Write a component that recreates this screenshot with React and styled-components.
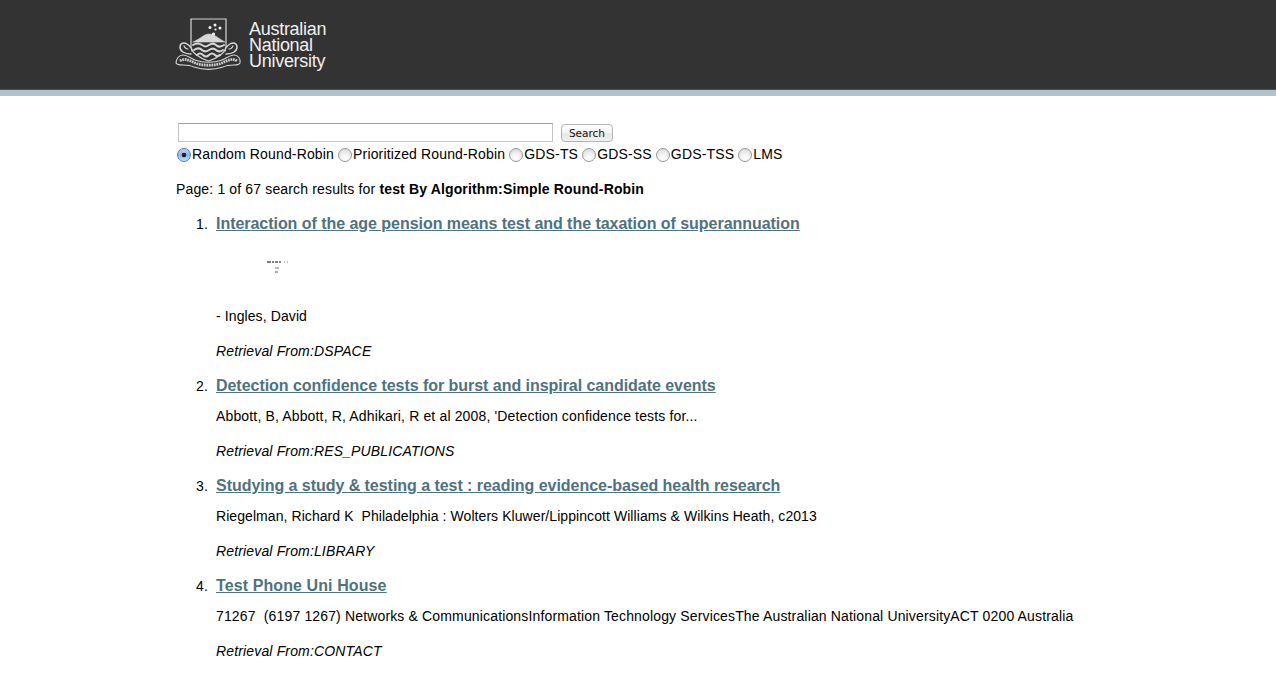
import React from "react";
import styled, { createGlobalStyle } from "styled-components";

const Global = createGlobalStyle`
  html, body { margin: 0; padding: 0; background: #fff; }
  body {
    font-family: "Liberation Sans", Arial, sans-serif;
    font-size: 14px;
    line-height: 21px;
    letter-spacing: 0.15px;
    color: #000;
  }
`;

const Header = styled.header`
  height: 90px;
  background: #333;
  border-bottom: 6px solid #aec4c9;
  box-sizing: content-box;
  display: flex;
  align-items: flex-start;
  padding-left: 172px;
  box-shadow: inset 0 -1px 0 #4a4f50;
`;
const Crest = styled.svg`
  width: 76px;
  height: 60px;
  margin-top: 14px;
  flex: none;
`;
const Wordmark = styled.div`
  margin: 21px 0 0 1px;
  font-size: 18px;
  line-height: 16px;
  letter-spacing: -0.28px;
  color: #efefef;
`;
const Main = styled.main`
  padding: 27px 0 0 176px;
`;
const SearchForm = styled.form`
  margin: 0;
`;
const SearchRow = styled.div`
  display: flex;
  align-items: flex-start;
  padding-left: 2px;
  height: 21px;
`;
const SearchInput = styled.input`
  width: 375px;
  height: 19px;
  box-sizing: border-box;
  margin: 0;
  padding: 0 2px;
  border: 1px solid #c4c4c4;
  border-top-color: #9e9e9e;
  background: #fff;
  outline: none;
`;
const SearchButton = styled.button`
  width: 52px;
  height: 18px;
  margin: 1px 0 0 8px;
  padding: 0;
  box-sizing: border-box;
  border: 1px solid #b4b4b4;
  border-radius: 4px;
  background: linear-gradient(#ffffff, #f3f3f3 50%, #e6e6e6 55%, #f2f2f2);
  font-family: "DejaVu Sans", sans-serif;
  font-size: 10.5px;
  line-height: 15px;
  letter-spacing: 0;
  color: #111;
`;
const RadioRow = styled.div`
  height: 21px;
  white-space: pre;
`;
const RadioLabel = styled.label`
  display: inline-flex;
  align-items: center;
  margin-right: 3.1px;
`;
const Radio = styled.input.attrs({ type: "radio", name: "alg" })`
  appearance: none;
  width: 14px;
  height: 14px;
  margin: 1px 1px 0 1px;
  border-radius: 50%;
  border: 1px solid #9a9a9a;
  box-sizing: border-box;
  background: radial-gradient(circle at 50% 75%, #ffffff, #f0f0f0 45%, #cfcfcf 100%);
  &:checked {
    border-color: #5b7fb5;
    background: radial-gradient(circle, #222 0 2px, transparent 2.6px), linear-gradient(#bcd2f0, #8fb4e8 50%, #c6dbf7);
  }
`;
const Status = styled.p`
  margin: 14px 0 0;
`;
const Results = styled.ol`
  margin: 12px 0 0;
  padding: 0 0 0 40px;
`;
const Result = styled.li`
  margin: 0 0 12px;
  &::marker {
    content: counter(list-item) ".\\00a0\\00a0";
  }
`;
const ResultTitle = styled.a`
  display: block;
  font-size: 16px;
  line-height: 24px;
  font-weight: bold;
  letter-spacing: ${(p) => p.$tracking || "-0.04px"};
  color: #4e7280;
  text-decoration: underline;
  margin-bottom: 8px;
`;
const Para = styled.p`
  margin: 0 0 14px;
  letter-spacing: ${(p) => p.$tracking || "0.15px"};
`;
const Source = styled.p`
  margin: 0;
  font-style: italic;
`;
const Thumb = styled.svg`
  display: block;
  width: 24px;
  height: 16px;
  margin: 23px 0 31px 50px;
`;

const Shimmer = () => (
  <g stroke="#000" strokeWidth="1" fill="none">
    <path d="M1 3h4M6 3h2M9 3h3M13 3h2" />
    <path d="M18 3h1M21 3h1" stroke="#777" />
    <path d="M9 9h4" stroke="#777" />
    <path d="M9 13h3" stroke="#555" />
  </g>
);

const LogoMark = () => (
  <Crest viewBox="0 0 76 60" aria-hidden="true">
    <g fill="none" stroke="#d6d6d6" strokeLinecap="round">
      <path d="M19 5H54V33C54 38 46 44 36.5 47 27 44 19 38 19 33Z" strokeWidth="1.2" fill="#333" />
      <path d="M21 28C28 25 32 20 37 20 43 20 47 25 53 28Z" fill="#d6d6d6" strokeWidth=".5" />
      <path d="M21 31C24 29 27 29 30 31S34 33 37 31 42 29 44 31 49 33 52 31" strokeWidth="2" />
      <path d="M22 36C25 34 28 34 30 36S34 38 37 36 42 34 44 36 48 38 51 36" strokeWidth="2" />
      <path d="M25 41C27 39 29 39 31 41S35 43 37 41 41 39 43 41 46 42 48 41" strokeWidth="2" />
      <path d="M19 40C12 40 8 37 8 33 8 29 12 28 15 30 18 32 20 34 20 37" strokeWidth="1.5" fill="#333" />
      <path d="M54 40C61 40 65 37 65 33 65 29 61 28 58 30 55 32 53 34 53 37" strokeWidth="1.5" fill="#333" />
      <path d="M12 32C13 34 15 35 16 35M61 32C60 34 58 35 57 35" strokeWidth="1.2" />
      <path d="M4 49C4 45 7 41 11 41 15 41 18 44 23 46 31 49 42 49 50 46 55 44 58 41 62 41 66 41 69 45 68 49 67 51 65 51 62 51 58 51 55 51 51 53 42 56 31 56 22 53 18 51 15 51 11 51 8 51 5 51 4 49Z" strokeWidth="1.1" fill="#333" />
      <path d="M8 47C12 44 17 46 23 49 31 52 42 52 50 49 56 46 61 44 65 47" strokeWidth="2.8" stroke="#cacaca" strokeDasharray="1.8 .7" strokeLinecap="butt" />
    </g>
    <g fill="#f0f0f0">
      <circle cx="43" cy="11" r="1.5" />
      <circle cx="38" cy="13.5" r="1.5" />
      <circle cx="48" cy="14" r="1.5" />
      <circle cx="43.5" cy="15.5" r="1.1" />
      <circle cx="41.5" cy="20" r="1.6" />
    </g>
  </Crest>
);

const ALGS = ["Random Round-Robin", "Prioritized Round-Robin", "GDS-TS", "GDS-SS", "GDS-TSS", "LMS"];

export default function App() {
  return (
    <>
      <Global />
      <Header>
        <LogoMark />
        <Wordmark>
          Australian<br />National<br />University
        </Wordmark>
      </Header>
      <Main>
        <SearchForm onSubmit={(e) => e.preventDefault()}>
          <SearchRow>
            <SearchInput type="text" aria-label="Search" />
            <SearchButton type="submit">Search</SearchButton>
          </SearchRow>
          <RadioRow>
            {ALGS.map((a, i) => (
              <RadioLabel key={a}>
                <Radio defaultChecked={i === 0} />
                {a}
              </RadioLabel>
            ))}
          </RadioRow>
        </SearchForm>
        <Status>
          Page: 1 of 67 search results for <b>test By Algorithm:Simple Round-Robin</b>
        </Status>
        <Results>
          <Result>
            <ResultTitle href="#">Interaction of the age pension means test and the taxation of superannuation</ResultTitle>
            <Thumb viewBox="0 0 24 16" aria-hidden="true"><Shimmer /></Thumb>
            <Para $tracking="0.1px">- Ingles, David</Para>
            <Source>Retrieval From:DSPACE</Source>
          </Result>
          <Result>
            <ResultTitle href="#">Detection confidence tests for burst and inspiral candidate events</ResultTitle>
            <Para>Abbott, B, Abbott, R, Adhikari, R et al 2008, 'Detection confidence tests for...</Para>
            <Source>Retrieval From:RES_PUBLICATIONS</Source>
          </Result>
          <Result>
            <ResultTitle href="#">Studying a study &amp; testing a test : reading evidence-based health research</ResultTitle>
            <Para $tracking="0.07px">Riegelman, Richard K{"\u00a0\u00a0"}Philadelphia : Wolters Kluwer/Lippincott Williams &amp; Wilkins Heath, c2013</Para>
            <Source>Retrieval From:LIBRARY</Source>
          </Result>
          <Result>
            <ResultTitle href="#" $tracking="0.1px">Test Phone Uni House</ResultTitle>
            <Para>71267{"\u00a0\u00a0"}(6197 1267) Networks &amp; CommunicationsInformation Technology ServicesThe Australian National UniversityACT 0200 Australia</Para>
            <Source>Retrieval From:CONTACT</Source>
          </Result>
        </Results>
      </Main>
    </>
  );
}
